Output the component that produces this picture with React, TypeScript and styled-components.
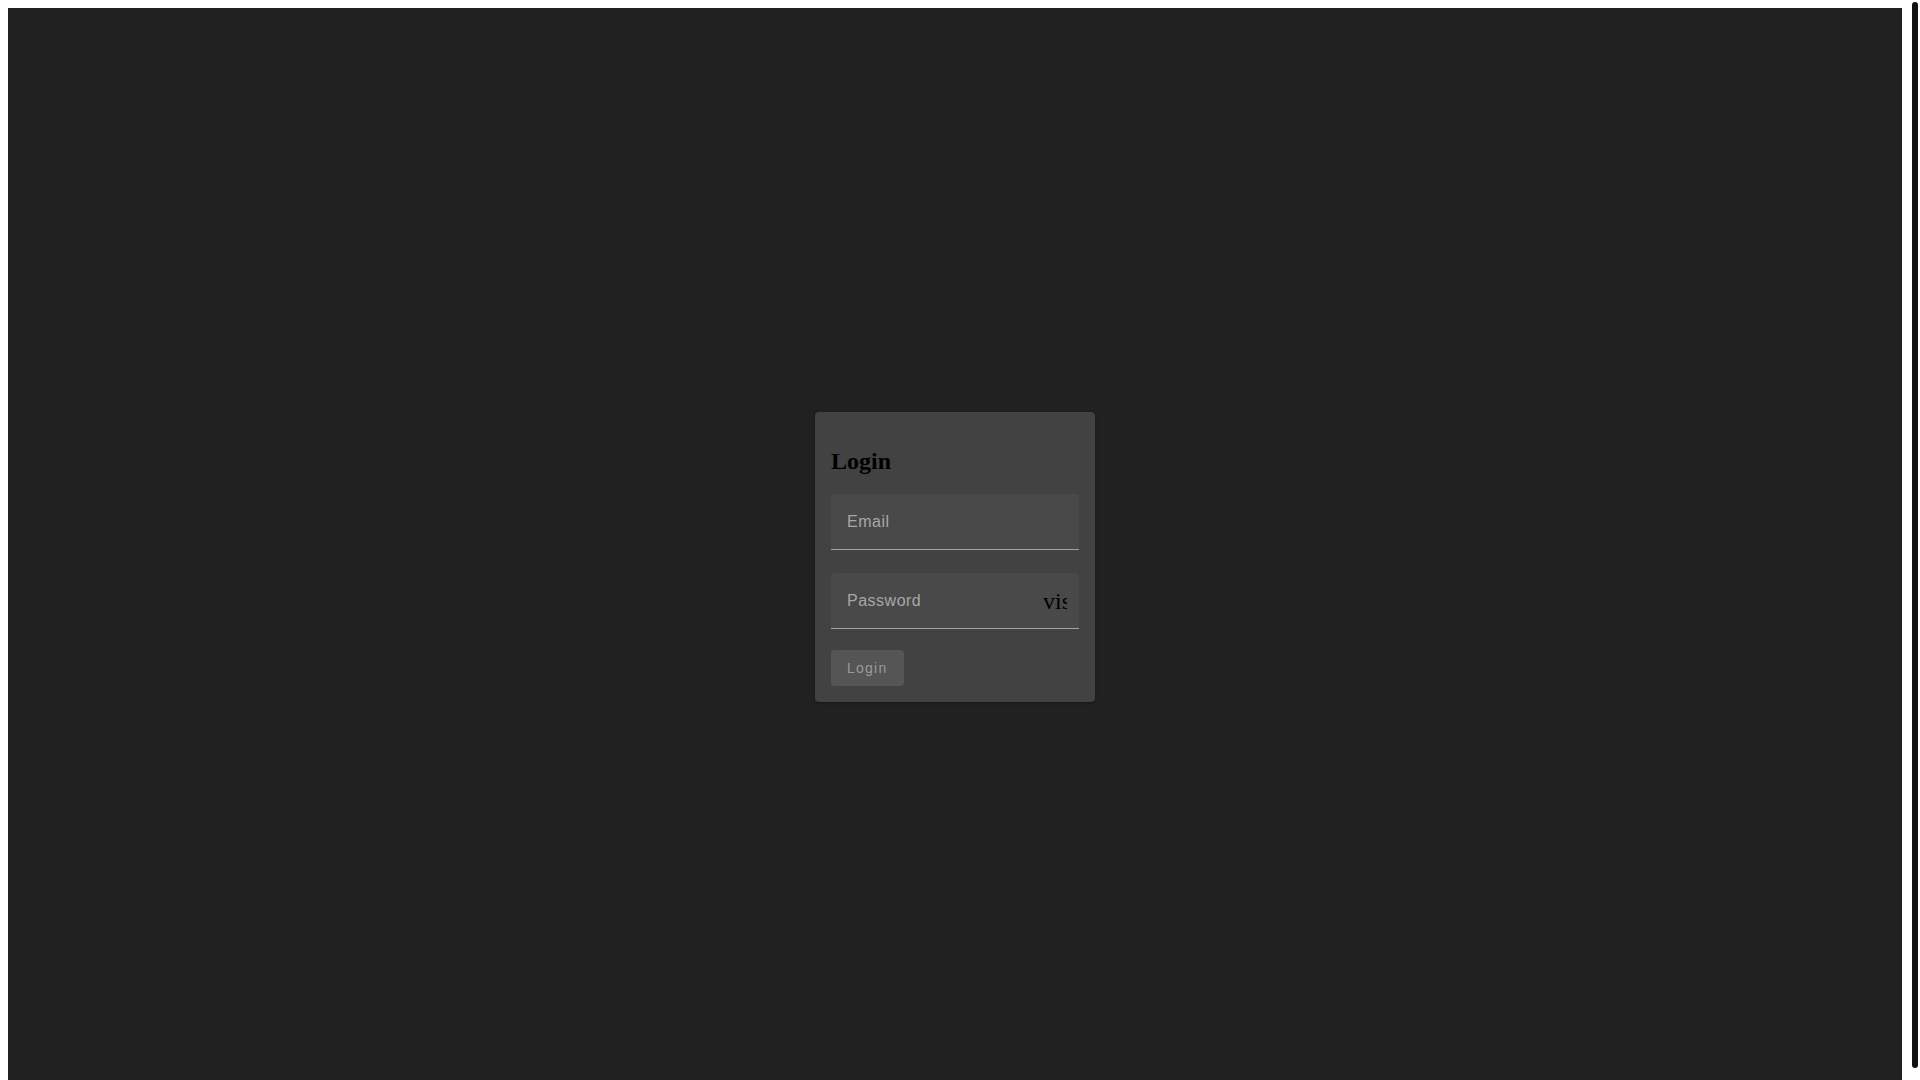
import styled, { createGlobalStyle } from 'styled-components';

const GlobalStyle = createGlobalStyle`
  body {
    margin: 8px 18px 8px 8px;
    background: #fff;
  }
`;

const Page = styled.div`
  box-sizing: border-box;
  height: 100vh;
  padding-top: 18px;
  background: #212121;
  display: flex;
  justify-content: center;
  align-items: center;
`;

// the window's scroll thumb, drawn since the screenshot leaves it out
const ScrollThumb = styled.div`
  position: fixed;
  top: 2px;
  right: 2px;
  width: 6px;
  height: 1066px;
  border-radius: 3px;
  background: #111;
`;

const Card = styled.form`
  width: 248px;
  padding: 16px;
  background: #424242;
  border-radius: 4px;
  box-shadow: 0 1px 3px rgba(0, 0, 0, 0.35);
  display: flex;
  flex-direction: column;
`;

const Title = styled.h2`
  margin: 20px 0 19px;
  font-family: "Liberation Serif", "Times New Roman", serif;
  font-size: 24px;
  font-weight: 700;
  color: #000;
`;

const Field = styled.div<{ $gap?: number }>`
  height: 55px;
  margin-bottom: ${props => props.$gap ?? 0}px;
  display: flex;
  align-items: center;
  padding: 0 12px 0 16px;
  background: #494949;
  border-radius: 4px 4px 0 0;
  border-bottom: 1px solid #a3a3a3;
`;

const Input = styled.input`
  flex: 1;
  min-width: 0;
  border: none;
  outline: none;
  background: transparent;
  padding: 0;
  font-family: "Liberation Sans", Arial, sans-serif;
  font-size: 16px;
  letter-spacing: 0.5px;
  color: #e0e0e0;

  &::placeholder {
    color: #a7a7a7;
    opacity: 1;
  }
`;

const IconText = styled.span`
  width: 24px;
  height: 24px;
  overflow: hidden;
  white-space: nowrap;
  font-family: "Liberation Serif", "Times New Roman", serif;
  font-size: 24px;
  line-height: 24px;
  color: #000;
`;

const Button = styled.button`
  align-self: flex-start;
  height: 36px;
  padding: 0 16px;
  border: none;
  border-radius: 4px;
  background: #555555;
  font-family: "Liberation Sans", Arial, sans-serif;
  font-size: 14px;
  letter-spacing: 1.25px;
  color: #9b9b9b;
  cursor: pointer;
`;

const App = () => {
  return (
    <>
      <GlobalStyle />
      <Page>
        <Card onSubmit={e => e.preventDefault()}>
          <Title>Login</Title>
          <Field $gap={23}>
            <Input type="email" placeholder="Email" />
          </Field>
          <Field $gap={21}>
            <Input type="password" placeholder="Password" />
            <IconText>visibility</IconText>
          </Field>
          <Button type="submit">Login</Button>
        </Card>
      </Page>
      <ScrollThumb />
    </>
  );
};

export default App;
